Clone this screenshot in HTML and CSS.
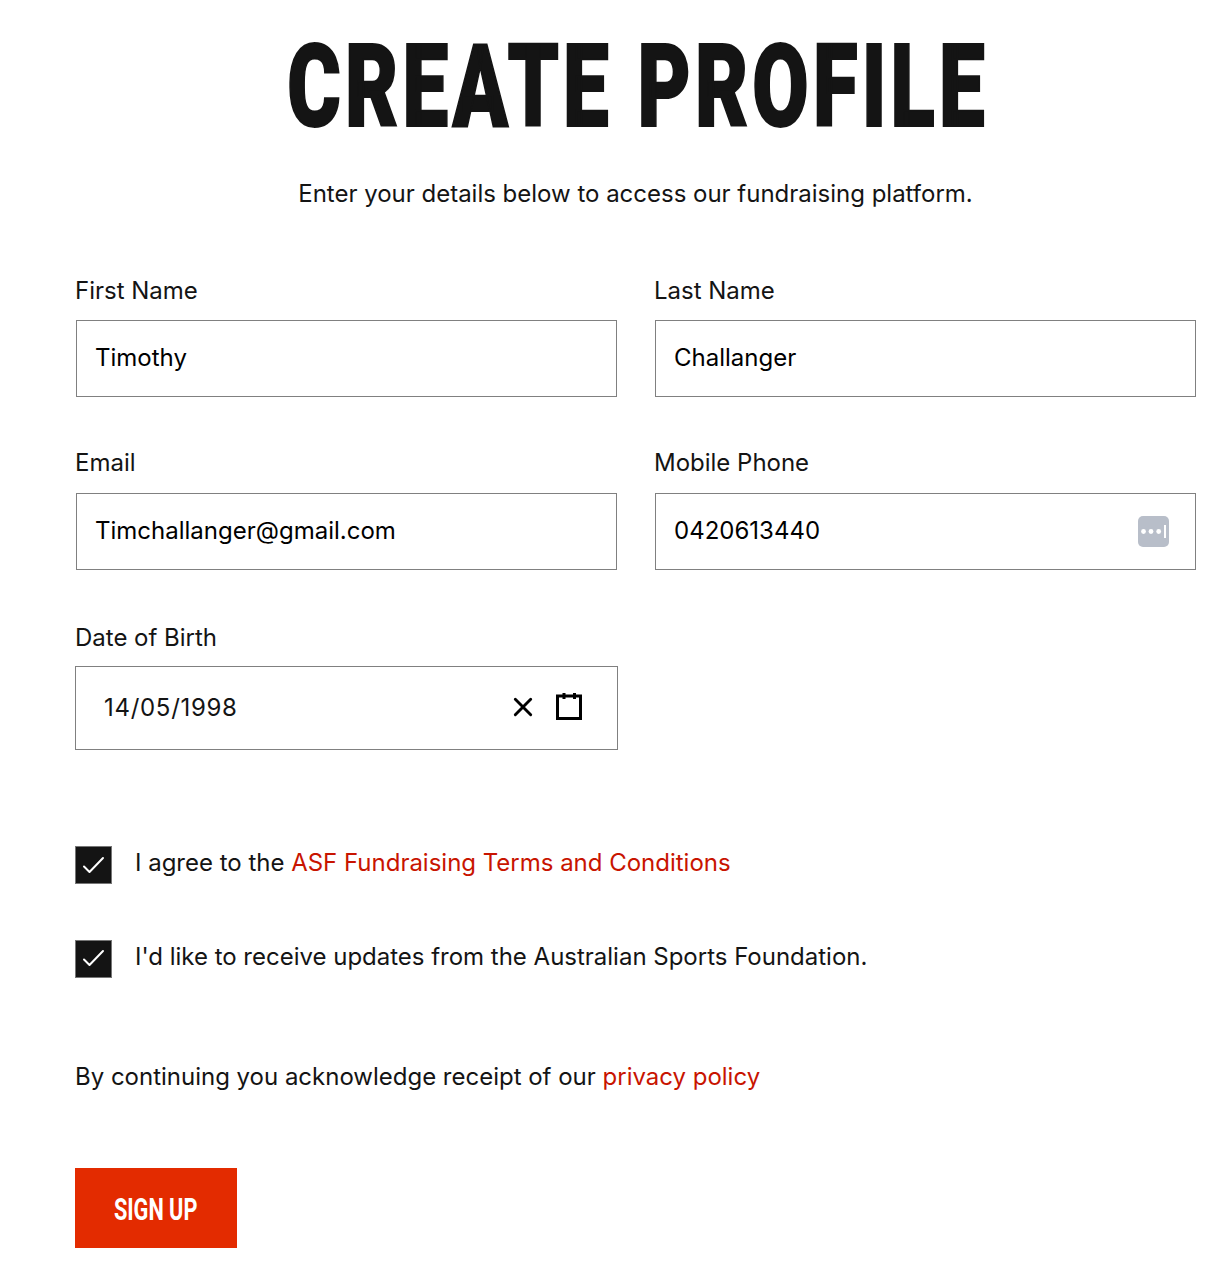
FILE: index.html
```html
<!DOCTYPE html>
<html lang="en">
<head>
    <meta charset="UTF-8">
    <meta name="viewport" content="width=device-width, initial-scale=1.0">
    <title>Create Profile</title>
    <link rel="stylesheet" href="styles.css">
</head>
<body>
    <form class="profile">
        <h1><span>CREATE PROFILE</span></h1>
        <p class="intro">Enter your details below to access our fundraising platform.</p>

        <div class="fields">
            <div class="field">
                <label for="first">First Name</label>
                <input type="text" id="first" value="Timothy">
            </div>
            <div class="field">
                <label for="last">Last Name</label>
                <input type="text" id="last" value="Challanger">
            </div>
            <div class="field contact">
                <label for="email">Email</label>
                <input type="text" id="email" value="Timchallanger@gmail.com">
            </div>
            <div class="field contact">
                <label for="phone">Mobile Phone</label>
                <input type="text" id="phone" value="0420613440">
                <svg class="autofill" width="31" height="31" viewBox="0 0 31 31">
                    <rect width="31" height="31" rx="5" fill="#b8bec9"/>
                    <g fill="#fff">
                        <circle cx="5.5" cy="15.5" r="2.4"/>
                        <circle cx="13" cy="15.5" r="2.4"/>
                        <circle cx="20.7" cy="15.5" r="2.4"/>
                        <rect x="26" y="9" width="2" height="13"/>
                    </g>
                </svg>
            </div>
            <div class="field dob">
                <label for="dob">Date of Birth</label>
                <div class="date">
                    <input type="text" id="dob" value="14/05/1998">
                    <svg class="clear" width="20" height="20" viewBox="0 0 20 20">
                        <path d="M2.3 2.3L17.7 17.7M17.7 2.3L2.3 17.7" fill="none" stroke="#000" stroke-width="2.9" stroke-linecap="round"/>
                    </svg>
                    <svg width="26" height="28" viewBox="0 0 26 28">
                        <path d="M1.5 3H24.5V25.5H1.5Z" fill="none" stroke="#000" stroke-width="3"/>
                        <path d="M8 0V6M18.5 0V6" stroke="#000" stroke-width="3"/>
                    </svg>
                </div>
            </div>
        </div>

        <div class="check">
            <span class="box">
                <svg width="35" height="36" viewBox="0 0 35 36"><path d="M8 19.5L13.5 25L27 11" fill="none" stroke="#fff" stroke-width="2" stroke-linecap="round" stroke-linejoin="round"/></svg>
            </span>
            <p>I agree to the <a href="#">ASF Fundraising Terms and Conditions</a></p>
        </div>
        <div class="check">
            <span class="box">
                <svg width="35" height="36" viewBox="0 0 35 36"><path d="M8 18.5L13.5 24L27 10" fill="none" stroke="#fff" stroke-width="2" stroke-linecap="round" stroke-linejoin="round"/></svg>
            </span>
            <p>I'd like to receive updates from the Australian Sports Foundation.</p>
        </div>

        <p class="privacy">By continuing you acknowledge receipt of our <a href="#">privacy policy</a></p>
        <button type="button"><span>SIGN UP</span></button>
    </form>
</body>
</html>
```
FILE: styles.css
```css
* {
    box-sizing: border-box;
}
body {
    margin: 0;
    background-color: #fff;
    color: #141414;
    font-family: Inter, sans-serif;
    font-size: 24px;
    line-height: 30px;
    letter-spacing: -0.01px;
}
.profile {
    width: 1121px;
    margin-left: 75px;
    padding-top: 27px;
}
h1 {
    height: 120px;
    margin: 0;
    padding-left: 5px;
    font-family: Roboto, sans-serif;
    font-size: 115px;
    font-weight: 900;
    line-height: 120px;
    letter-spacing: 5.9px;
    display: flex;
    justify-content: center;
}
h1 span {
    white-space: nowrap;
    transform: scaleX(0.71);
    -webkit-text-stroke: 2px #141414;
}
p {
    margin: 0;
}
a {
    color: #c81400;
    text-decoration: none;
}
.intro {
    margin: 32px 0 67px;
    text-align: center;
}
.fields {
    display: grid;
    grid-template-columns: 542px 542px;
    column-gap: 37px;
    row-gap: 51px;
}
.field {
    position: relative;
}
label {
    display: block;
    height: 44px;
}
.contact label {
    height: 45px;
}
input {
    display: block;
    width: 541px;
    height: 77px;
    margin-left: 1px;
    padding: 0 18px 2px;
    border: 1px solid #808080;
    background: none;
    color: #000;
    font: inherit;
}
.autofill {
    position: absolute;
    right: 27px;
    bottom: 23px;
}
.dob {
    padding-top: 2px;
}
.dob label {
    height: 43px;
}
.date {
    display: flex;
    align-items: center;
    width: 543px;
    height: 84px;
    padding: 0 35px 2px 28px;
    border: 1px solid #808080;
}
.date input {
    flex: 1;
    width: auto;
    height: 80px;
    margin: 0;
    padding: 0;
    border: none;
    color: #141414;
    letter-spacing: 0.7px;
}
.clear {
    margin-right: 23px;
}
.check {
    display: flex;
    gap: 23px;
    height: 38px;
    margin-bottom: 56px;
}
.fields + .check {
    margin-top: 96px;
}
.box {
    width: 37px;
    height: 38px;
    border: 1px solid #767676;
    background-color: #141414;
}
.box svg {
    display: block;
}
.check p {
    padding-top: 2px;
}
.privacy {
    padding-top: 28px;
}
button {
    display: flex;
    align-items: center;
    justify-content: center;
    width: 162px;
    height: 80px;
    margin-top: 76px;
    padding: 2px 0 0;
    border: none;
    background-color: #e32b00;
    color: #fff;
    font-family: Roboto, sans-serif;
    font-size: 31px;
    font-weight: 700;
}
button span {
    white-space: nowrap;
    transform: scaleX(0.7);
}
```
